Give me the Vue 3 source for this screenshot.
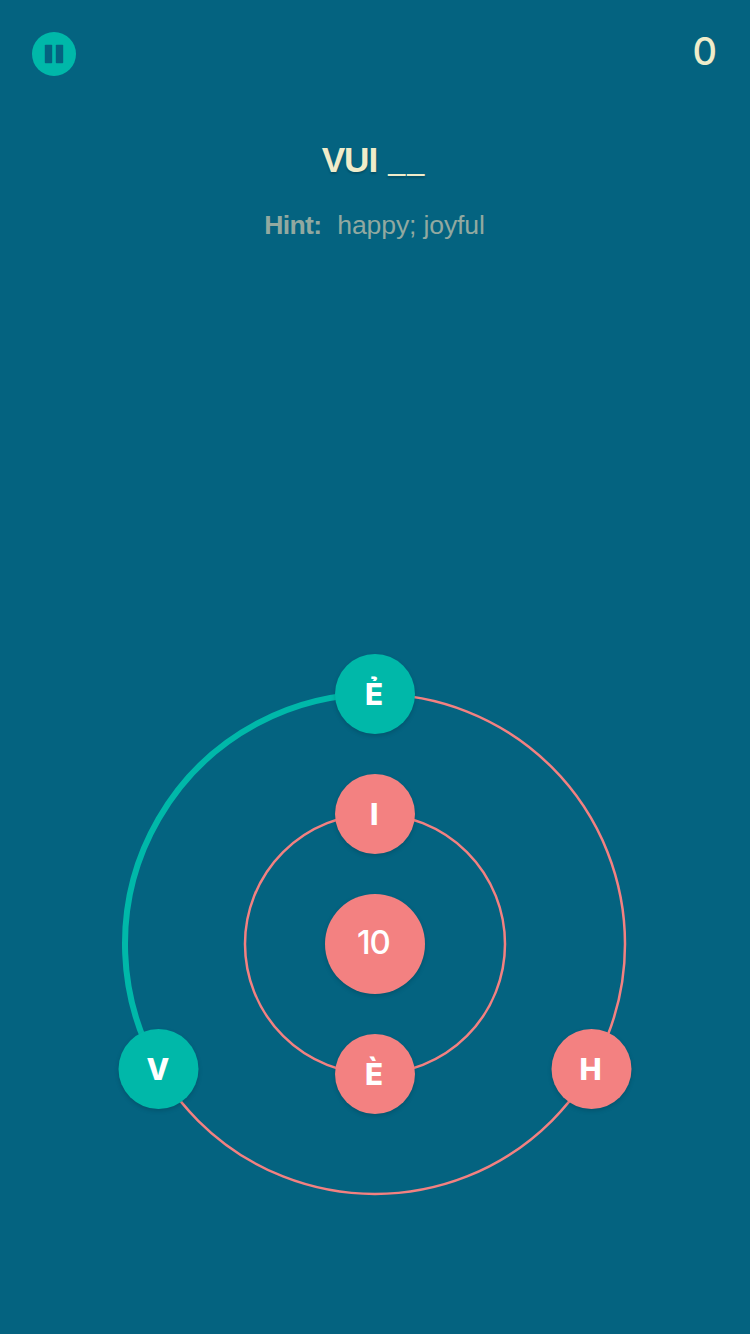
<script setup>
const nodes = [
  { x: 375, y: 694, label: 'Ẻ', tx: 374, active: true },
  { x: 375, y: 814, label: 'I', tx: 374.3 },
  { x: 375, y: 1074, label: 'È', tx: 374 },
  { x: 158.5, y: 1069, label: 'V', tx: 157.8, active: true },
  { x: 591.5, y: 1069, label: 'H', tx: 590.7 },
]
</script>

<template>
  <main class="game">
    <header class="top">
      <button class="pause" aria-label="Pause">
        <svg viewBox="0 0 44 44" width="44" height="44">
          <rect x="12.8" y="12.8" width="7.4" height="18.4" rx="0.8" />
          <rect x="23.8" y="12.8" width="7.4" height="18.4" rx="0.8" />
        </svg>
      </button>
      <div class="score">0</div>
    </header>
    <h1 class="word"><span>VUI</span><span class="blanks">__</span></h1>
    <p class="hint"><b>Hint:</b><span>happy; joyful</span></p>
    <svg class="board" viewBox="0 634 750 700" width="750" height="700">
      <circle class="ring" cx="375" cy="944" r="250" />
      <circle class="ring" cx="375" cy="944" r="130" />
      <path class="link" d="M158.5 1069A250 250 0 0 1 375 694" />
      <g v-for="n in nodes" :key="n.label" :class="['node', { active: n.active }]">
        <circle :cx="n.x" :cy="n.y" r="40" />
        <text :x="n.tx" :y="n.y + 11">{{ n.label }}</text>
      </g>
      <g class="node timer">
        <circle cx="375" cy="944" r="50" />
        <text x="373.4" y="954">10</text>
      </g>
    </svg>
  </main>
</template>

<style>
body {
  background: #046380;
}
</style>

<style scoped>
.game {
  display: flex;
  flex-direction: column;
  width: 750px;
  height: 1334px;
  overflow: hidden;
  background: #046380;
  color: #efecca;
  font-family: "Liberation Sans", Arial, sans-serif;
}
.top {
  display: flex;
  justify-content: space-between;
  height: 44px;
  padding: 32px 33px 0 32px;
}
.pause {
  width: 44px;
  height: 44px;
  padding: 0;
  border: 0;
  border-radius: 50%;
  background: #00b8a9;
}
.pause svg {
  display: block;
  fill: #046380;
}
.score {
  font: 500 38px/38px Inter, sans-serif;
}
.word {
  display: flex;
  justify-content: center;
  gap: 11px;
  height: 40px;
  margin: 64px 0 0;
  padding-right: 2px;
  font-size: 35.2px;
  line-height: 40px;
  letter-spacing: -1px;
  text-shadow: 0 2px 2px rgba(0, 0, 0, 0.2);
}
.blanks {
  font-size: 30.6px;
  font-weight: 400;
  line-height: 38px;
  letter-spacing: 2px;
}
.hint {
  display: flex;
  justify-content: center;
  gap: 16px;
  height: 30px;
  margin: 30px 0 0;
  padding-right: 1px;
  font-size: 26.6px;
  line-height: 30px;
  letter-spacing: -0.15px;
  color: #92a9a0;
}
.hint b {
  letter-spacing: -0.7px;
}
.board {
  display: block;
  flex: none;
  margin-top: auto;
}
.ring {
  fill: none;
  stroke: #f38181;
  stroke-width: 2.5;
}
.link {
  fill: none;
  stroke: #00b8a9;
  stroke-width: 6;
}
.node circle {
  fill: #f38181;
  filter: drop-shadow(0 2px 2px rgba(0, 0, 0, 0.15));
}
.node.active circle {
  fill: #00b8a9;
}
.node text {
  fill: #fff;
  font-family: Inter, sans-serif;
  font-size: 29.6px;
  font-weight: 800;
  text-anchor: middle;
}
.node.timer text {
  font-size: 33px;
  font-weight: 500;
  letter-spacing: -1px;
}
</style>
